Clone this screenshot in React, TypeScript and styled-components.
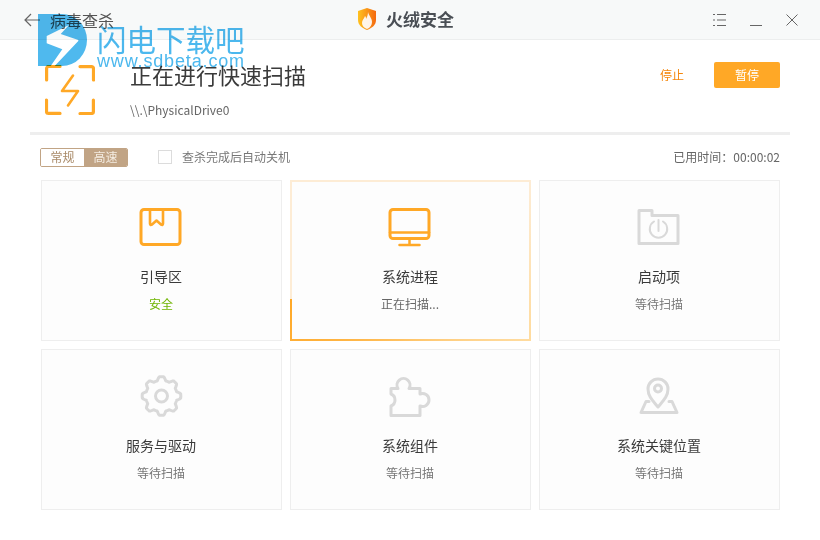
import React from "react";
import styled, { createGlobalStyle } from "styled-components";

const FONT = `"Noto Sans CJK SC", "Noto Sans", sans-serif`;
const ORANGE = "#ffa826";
const IDLE = "#d9d9d9";

const Global = createGlobalStyle`
  html, body { margin: 0; padding: 0; background: #fff; }
  * { box-sizing: border-box; }
`;

const Page = styled.div`
  position: relative;
  width: 820px;
  height: 540px;
  overflow: hidden;
  background: #fff;
  font-family: ${FONT};
  color: #333;
`;

const TitleBar = styled.header`
  display: grid;
  grid-template-columns: 1fr auto 1fr;
  align-items: center;
  height: 40px;
  padding: 0 22px 0 24px;
  background: #f7f9f9;
  border-bottom: 1px solid #eceeee;
`;

const BackLink = styled.div`
  display: flex;
  align-items: center;
  gap: 10px;
  font-size: 16px;
  line-height: 20px;
  color: #555;
`;

const Brand = styled.div`
  display: flex;
  align-items: center;
  gap: 10px;
  margin: -2px 0 0 -10px;
  font-size: 17px;
  line-height: 20px;
  font-weight: 700;
  color: #4a4f55;
`;

const WindowControls = styled.div`
  display: flex;
  justify-content: flex-end;
  align-items: center;
  gap: 24px;
  color: #666;
`;

const Hero = styled.section`
  display: flex;
  height: 92px;
  padding: 25px 40px 0 45px;
`;

const HeroText = styled.div`
  display: flex;
  flex-direction: column;
  flex: 1;
  margin: -9px 0 0 35px;
`;

const HeroTitle = styled.h1`
  margin: 0;
  font-size: 22px;
  font-weight: 400;
  line-height: 36px;
  color: #3a3a3a;
`;

const HeroPath = styled.div`
  margin-top: 9px;
  font-size: 12px;
  line-height: 18px;
  color: #666;
`;

const HeroActions = styled.div`
  display: flex;
  align-items: flex-start;
  gap: 30px;
  margin-top: -3px;
`;

const StopLink = styled.span`
  font-size: 12px;
  line-height: 25px;
  color: #f5860a;
`;

const PauseButton = styled.button`
  width: 66px;
  height: 26px;
  padding: 0 0 2px;
  border: 0;
  border-radius: 2px;
  background: ${ORANGE};
  color: #fff;
  font-family: ${FONT};
  font-size: 12px;
`;

const Divider = styled.hr`
  height: 3px;
  margin: 0 30px;
  border: 0;
  background: #eeeeee;
`;

const Toolbar = styled.div`
  display: flex;
  align-items: center;
  height: 45px;
  padding: 0 40px 1px;
  font-size: 12px;
  line-height: 16px;
  color: #777;
`;

const SpeedToggle = styled.div`
  display: flex;
  width: 88px;
  height: 19px;
  border: 1px solid #c1a485;
  border-radius: 2px;
  overflow: hidden;
`;

const SpeedOption = styled.span<{ $on?: boolean }>`
  flex: 1;
  text-align: center;
  line-height: 16px;
  background: ${(p) => (p.$on ? "#c1a485" : "#fff")};
  color: ${(p) => (p.$on ? "#f4ece2" : "#a98a68")};
`;

const CheckRow = styled.label`
  display: flex;
  align-items: center;
  gap: 10px;
  margin-left: 30px;
  flex: 1;
`;

const CheckBox = styled.span`
  width: 14px;
  height: 14px;
  border: 1px solid #dcdcdc;
  background: #fff;
`;

const Elapsed = styled.span`
  color: #666;
`;

const CardGrid = styled.div`
  display: grid;
  grid-template-columns: repeat(3, 241px);
  grid-auto-rows: 161px;
  gap: 8px;
  padding-left: 41px;
`;

const Card = styled.div<{ $active?: boolean }>`
  position: relative;
  display: flex;
  flex-direction: column;
  align-items: center;
  padding: 23px 1px 0 0;
  background: #fdfdfd;
  border: 1px solid ${(p) => (p.$active ? "transparent" : "#eeeeee")};
  ${(p) =>
    p.$active &&
    `&::before {
      content: "";
      position: absolute;
      inset: -1px;
      border: 2px solid;
      border-image: conic-gradient(#fdecd5 0deg 56deg, #ffdb9e 124deg, ${ORANGE} 252deg, #fdecd5 252deg) 1;
    }`}
`;

const CardIcon = styled.svg`
  display: block;
  width: 48px;
  height: 48px;
  flex: none;
`;

const CardLabel = styled.div`
  margin-top: 14px;
  font-size: 14px;
  line-height: 20px;
  color: #3a3a3a;
`;

const CardStatus = styled.div<{ $tone: "ok" | "busy" | "wait" }>`
  margin-top: 9px;
  font-size: 12px;
  line-height: 18px;
  color: ${(p) => (p.$tone === "ok" ? "#6fb400" : p.$tone === "busy" ? "#666" : "#777")};
`;

const Watermark = styled.div`
  position: absolute;
  left: 38px;
  top: 14px;
  display: flex;
  gap: 9px;
  pointer-events: none;
  mix-blend-mode: multiply;
`;

const WatermarkText = styled.div`
  display: flex;
  flex-direction: column;
  color: #4cb8ee;
`;

const WatermarkName = styled.div`
  font-size: 29.500px;
  line-height: 34px;
  margin-top: 7px;
`;

const WatermarkUrl = styled.div`
  font-family: "Liberation Sans", sans-serif;
  font-size: 18px;
  line-height: 18px;
  letter-spacing: 0.85px;
  margin-top: -3px;
`;

const gearPath = (() => {
  const pts: string[] = [];
  for (let i = 0; i < 240; i++) {
    const t = (i / 240) * Math.PI * 2;
    const c = Math.max(-1, Math.min(1, Math.cos(8 * t) * 1.7));
    const r = 17.500 + 1.800 * c;
    pts.push(`${(24.500 + r * Math.sin(t)).toFixed(2)} ${(23 - r * Math.cos(t)).toFixed(2)}`);
  }
  return `M${pts.join("L")}Z`;
})();

const BootIcon = () => (
  <CardIcon viewBox="0 0 48 48" fill="none" stroke={ORANGE} strokeWidth="3" strokeLinejoin="round">
    <rect x="4" y="5.500" width="39" height="35" rx="3" />
    <path d="M13 6v13.500q0 2 2 1l4.500-4 4.500 4q2 1 2-1V6" strokeWidth="2.600" />
  </CardIcon>
);

const MonitorIcon = () => (
  <CardIcon viewBox="0 0 48 48" fill="none" stroke={ORANGE} strokeWidth="3" strokeLinecap="round" strokeLinejoin="round">
    <rect x="4" y="5.500" width="39" height="29" rx="3" />
    <path d="M4 28.500h39" strokeWidth="2.500" />
    <path d="M23.500 35v5M13.500 41h20" strokeWidth="2.500" />
  </CardIcon>
);

const FolderIcon = () => (
  <CardIcon viewBox="0 0 48 48" fill="none" stroke={IDLE} strokeWidth="3" strokeLinecap="round" strokeLinejoin="round">
    <path d="M4 6.500h13v5h26v28H4z" />
    <path d="M19 17.500a8.700 8.700 0 1 0 9 0" strokeWidth="2" />
    <path d="M23.500 16v11" strokeWidth="2" />
  </CardIcon>
);

const GearIcon = () => (
  <CardIcon viewBox="0 0 48 48" fill="none" stroke={IDLE} strokeWidth="3" strokeLinejoin="round">
    <path d={gearPath} />
    <circle cx="24.500" cy="23" r="6" />
  </CardIcon>
);

const PuzzleIcon = () => (
  <CardIcon viewBox="0 0 48 48" fill="none" stroke={IDLE} strokeWidth="3" strokeLinejoin="round">
    <path d="M5 15.500h7a6.500 6.500 0 1 1 11 0h11V21a6.500 6.500 0 1 1 0 12v9.500H5V33a6.500 6.500 0 0 0 0-12z" />
  </CardIcon>
);

const PinIcon = () => (
  <CardIcon viewBox="0 0 48 48" fill="none" stroke={IDLE} strokeWidth="3" strokeLinejoin="round">
    <path d="M23 34c-5-6-10-10.500-10-18a10 10 0 0 1 20 0c0 7.500-5 12-10 18z" />
    <circle cx="23" cy="15.500" r="3.500" />
    <path d="M14 28.500h-3L6 39.500h36l-5-11h-3" strokeLinecap="round" />
  </CardIcon>
);

const scanCards = [
  { label: "引导区", status: "安全", tone: "ok", Icon: BootIcon },
  { label: "系统进程", status: "正在扫描...", tone: "busy", Icon: MonitorIcon, active: true },
  { label: "启动项", status: "等待扫描", tone: "wait", Icon: FolderIcon },
  { label: "服务与驱动", status: "等待扫描", tone: "wait", Icon: GearIcon },
  { label: "系统组件", status: "等待扫描", tone: "wait", Icon: PuzzleIcon },
  { label: "系统关键位置", status: "等待扫描", tone: "wait", Icon: PinIcon },
] as const;

export default function App() {
  return (
    <Page>
      <Global />
      <TitleBar>
        <BackLink>
          <svg width="16" height="14" viewBox="0 0 16 14" fill="none" stroke="#666" strokeWidth="1.200">
            <path d="M16 7H1M7 1L1 7l6 6" />
          </svg>
          病毒查杀
        </BackLink>
        <Brand>
          <svg width="18" height="22" viewBox="0 0 18 22">
            <defs>
              <linearGradient id="shield" x1="0" y1="0" x2="1" y2="0">
                <stop offset="0" stopColor="#ffc21f" />
                <stop offset="1" stopColor="#f4690f" />
              </linearGradient>
            </defs>
            <path d="M0 3l9-3 9 3v9c0 5-4 8-9 10-5-2-9-5-9-10z" fill="url(#shield)" />
            <path d="M10 4c1 4 4 6 4 10 0 3-2 6-5 7-3-1-5-3-5-6 0-3 2-4 3-7 1 1 1 2 1 3 1-2 2-4 2-7z" fill="#fff" opacity="0.9" />
          </svg>
          火绒安全
        </Brand>
        <WindowControls>
          <svg width="13" height="12" viewBox="0 0 13 12" fill="none" stroke="#666" strokeWidth="1">
            <path d="M0 .5h2M4 .5h9M0 6h2M4 6h9M0 11.500h2M4 11.500h9" />
          </svg>
          <svg width="12" height="12" viewBox="0 0 12 12" fill="none" stroke="#666" strokeWidth="1">
            <path d="M0 11.500h12" />
          </svg>
          <svg width="12" height="12" viewBox="0 0 12 12" fill="none" stroke="#666" strokeWidth="1">
            <path d="M.5.5l11 11M11.500.5l-11 11" />
          </svg>
        </WindowControls>
      </TitleBar>

      <Hero>
        <svg width="50" height="50" viewBox="0 0 50 50" fill="none" stroke={ORANGE} strokeWidth="3.200" strokeLinecap="round" strokeLinejoin="round">
          <path d="M1.600 15V3.500a2 2 0 0 1 2-2H15M35 1.600h11.500a2 2 0 0 1 2 2V15M48.400 35v11.500a2 2 0 0 1-2 2H35M15 48.400H3.500a2 2 0 0 1-2-2V35" />
          <path d="M28 10.500L17 26h16L23 40.500" strokeWidth="2.600" />
        </svg>
        <HeroText>
          <HeroTitle>正在进行快速扫描</HeroTitle>
          <HeroPath>\\.\PhysicalDrive0</HeroPath>
        </HeroText>
        <HeroActions>
          <StopLink>停止</StopLink>
          <PauseButton>暂停</PauseButton>
        </HeroActions>
      </Hero>

      <Divider />

      <Toolbar>
        <SpeedToggle>
          <SpeedOption>常规</SpeedOption>
          <SpeedOption $on>高速</SpeedOption>
        </SpeedToggle>
        <CheckRow>
          <CheckBox />
          查杀完成后自动关机
        </CheckRow>
        <Elapsed>已用时间：00:00:02</Elapsed>
      </Toolbar>

      <CardGrid>
        {scanCards.map(({ label, status, tone, Icon, ...rest }) => (
          <Card key={label} $active={"active" in rest}>
            <Icon />
            <CardLabel>{label}</CardLabel>
            <CardStatus $tone={tone}>{status}</CardStatus>
          </Card>
        ))}
      </CardGrid>

      <Watermark>
        <svg width="50" height="52" viewBox="0 0 50 52">
          <path d="M0 0h24a25 26 0 0 1 0 52H0z" fill="#4fb9ee" />
          <path d="M31 11L8.700 22v7.300l15.600 6L12.700 52h4L40.300 27v-1L22.700 20z" fill="#fff" />
        </svg>
        <WatermarkText>
          <WatermarkName>闪电下载吧</WatermarkName>
          <WatermarkUrl>www.sdbeta.com</WatermarkUrl>
        </WatermarkText>
      </Watermark>
    </Page>
  );
}
